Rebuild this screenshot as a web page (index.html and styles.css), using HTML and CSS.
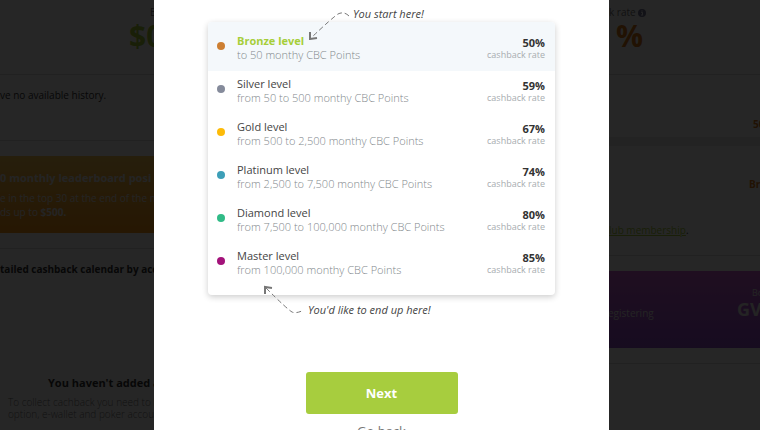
FILE: index.html
```html
<!DOCTYPE html>
<html lang="en">
<head>
  <meta charset="UTF-8" />
  <meta name="viewport" content="width=device-width, initial-scale=1.0" />
  <title>Cashback levels</title>
  <link rel="stylesheet" href="styles.css">
</head>
<body>
  <div class="page">
    <div class="column column-left">
      <section class="stat">
        <div class="stat-label">B</div>
        <div class="stat-value green">$0</div>
      </section>
      <section class="history">ve no available history.</section>
      <section class="banner banner-orange">
        <h3>0 monthly leaderboard posi</h3>
        <p>e in the top 30 at the end of the m</p>
        <p>ds up to <b>$500.</b></p>
      </section>
      <section class="calendar">
        <h4>tailed cashback calendar by acc</h4>
      </section>
      <section class="accounts">
        <h4>You haven't added a</h4>
        <p>To collect cachback you need to lin</p>
        <p>option, e-wallet and poker account</p>
      </section>
    </div>

    <div class="column column-right">
      <section class="stat">
        <div class="stat-label">k rate
          <svg class="info" viewBox="0 0 8 8"><circle cx="4" cy="4" r="4"/><path d="M3.2 3.4h1.3v2.4M3 6h2.2M4 1.4v1.2"/></svg>
        </div>
        <div class="stat-value orange">%</div>
      </section>
      <section class="rate orange">50</section>
      <section class="club">
        <div class="club-level orange">Bro</div>
        <p><a href="#">lub membership</a>.</p>
      </section>
      <section class="banner banner-purple">
        <span class="register">egistering</span>
        <div class="code">
          <div>Bo</div>
          <strong>GV</strong>
        </div>
      </section>
      <section class="last"></section>
    </div>
  </div>

  <div class="overlay">
    <div class="modal" role="dialog" aria-label="Cashback levels">
      <div class="note note-start">
        <svg class="arrow" width="44" height="32" viewBox="0 0 44 32">
          <path class="dash" d="M41 8 Q36 3 30 6 Q24 10 3 30"/>
          <path d="M2 24 L2 31 L9 30"/>
        </svg>
        You start here!
      </div>

      <ul class="levels">
        <li class="level active">
          <span class="dot bronze"></span>
          <div class="info-text"><div class="name">Bronze level</div><div class="range">to 50 monthy CBC Points</div></div>
          <div class="cashback"><b>50%</b><span>cashback rate</span></div>
        </li>
        <li class="level">
          <span class="dot silver"></span>
          <div class="info-text"><div class="name">Silver level</div><div class="range">from 50 to 500 monthy CBC Points</div></div>
          <div class="cashback"><b>59%</b><span>cashback rate</span></div>
        </li>
        <li class="level">
          <span class="dot gold"></span>
          <div class="info-text"><div class="name">Gold level</div><div class="range">from 500 to 2,500 monthy CBC Points</div></div>
          <div class="cashback"><b>67%</b><span>cashback rate</span></div>
        </li>
        <li class="level">
          <span class="dot platinum"></span>
          <div class="info-text"><div class="name">Platinum level</div><div class="range">from 2,500 to 7,500 monthy CBC Points</div></div>
          <div class="cashback"><b>74%</b><span>cashback rate</span></div>
        </li>
        <li class="level">
          <span class="dot diamond"></span>
          <div class="info-text"><div class="name">Diamond level</div><div class="range">from 7,500 to 100,000 monthy CBC Points</div></div>
          <div class="cashback"><b>80%</b><span>cashback rate</span></div>
        </li>
        <li class="level">
          <span class="dot master"></span>
          <div class="info-text"><div class="name">Master level</div><div class="range">from 100,000 monthy CBC Points</div></div>
          <div class="cashback"><b>85%</b><span>cashback rate</span></div>
        </li>
      </ul>

      <div class="note note-end">
        <svg class="arrow" width="44" height="32" viewBox="0 0 44 32">
          <path class="dash" d="M3 3 Q24 24 29 27 Q33 29 41 25"/>
          <path d="M2 9 L2 2 L9 3"/>
        </svg>
        You'd like to end up here!
      </div>

      <div class="actions">
        <button class="next" type="button">Next</button>
        <a class="back" href="#">Go back</a>
      </div>
    </div>
  </div>
</body>
</html>
```
FILE: styles.css
```css
* { box-sizing: border-box; }
body { margin: 0; height: 100vh; overflow: hidden; font-family: "Open Sans", "Noto Sans", sans-serif; font-size: 10px; line-height: 12px; color: #333; background: white; }
h3, h4, p, ul { margin: 0; padding: 0; }

/* page behind the popup */
.page { display: grid; grid-template-columns: 1fr 60% 1fr; white-space: nowrap; }
.column { min-width: 0; }
.column-left { margin-right: -8px; }
.column-right { grid-column: 3; }
.stat { height: 75px; padding-top: 6px; border-bottom: 1px solid #ddd; }
.column-left .stat { padding-left: 129px; }
.column-left .stat-label { padding-left: 21px; }
.column-right .stat-label { padding-left: 1px; }
.stat-label { color: #777; }
.info { width: 8px; height: 8px; vertical-align: -1px; }
.info circle { fill: #779; }
.info path { fill: none; stroke: white; }
.stat-value { font-size: 30px; line-height: 36px; font-weight: bold; }
.column-right .stat-value { padding-left: 8px; }
.green { color: #a6ce39; }
.orange { color: #d97818; }
.history { height: 66px; padding-top: 14px; border-bottom: 1px solid #ddd; }
.banner { height: 77px; }
.banner-orange { margin-top: 15px; padding-top: 16px; color: #eee; background: linear-gradient(#ffc850, #ff9914); }
.banner h3 { font-size: 11px; margin-bottom: 7px; }
.banner-orange p { line-height: 14px; }
.calendar { margin-top: 15px; padding-top: 14px; height: 129px; border-top: 1px solid #ddd; }
.calendar h4 { font-size: 10px; }
.accounts { padding-left: 8px; color: #777; }
.accounts h4 { padding: 0 0 7px 40px; font-size: 11px; color: #333; }
.accounts p { font-weight: 300; }

.rate { height: 62px; padding: 43px 0 0 145px; font-weight: bold; }
.club { height: 119px; padding-top: 32px; border-top: 9px solid #e8e8e8; border-bottom: 1px solid #ddd; }
.club-level { padding: 0 0 34px 141px; font-weight: bold; }
.club p { padding-left: 1px; }
.club a { color: #a6ce39; }
.banner-purple { display: flex; align-items: center; justify-content: space-between; margin-top: 15px; padding-top: 6px; color: #eee; background: linear-gradient(#d060d8, #9650d2); }
.code { width: 23px; padding-bottom: 20px; font-size: 9px; }
.code div { padding-left: 15px; }
.code strong { font-size: 18px; line-height: 20px; }
.last { margin-top: 15px; border-top: 1px solid #ddd; }

/* popup */
.overlay { position: fixed; inset: 0; display: flex; justify-content: center; padding-left: 3px; overflow: hidden; background: rgba(0,0,0,0.85); }
.modal { width: 455px; max-width: 100%; padding: 0 54px; background: white; }
.note { position: relative; padding-left: 145px; font-size: 11px; line-height: 16px; font-style: italic; color: #444; }
.note-start { padding-top: 6px; }
.note-end { padding: 7px 0 0 100px; }
.arrow { position: absolute; left: 100px; top: 8px; z-index: 1; fill: none; stroke: #777; stroke-width: 2; }
.note-end .arrow { left: 55px; top: -10px; }
.dash { stroke-width: 1; stroke-dasharray: 5 3; }
.levels { list-style: none; padding-bottom: 9px; border-radius: 4px; box-shadow: 0 2px 6px rgba(0,0,0,0.2); }
.level { display: flex; height: 43px; padding: 6px 10px 0 9px; }
.level.active { height: 49px; padding-top: 12px; border-radius: 4px 4px 0 0; background: #f4f8fb; }
.dot { width: 8px; height: 8px; margin: 8px 12px 0 0; border-radius: 50%; }
.bronze { background: #cd7f32; }
.silver { background: #858b9b; }
.gold { background: #fdbb08; }
.platinum { background: #3d9fb8; }
.diamond { background: #31bb87; }
.master { background: #a3127a; }
.info-text { flex: 1; font-size: 11px; line-height: 14px; }
.name { color: #444; }
.active .name { font-weight: bold; color: #a6ce39; }
.range { font-weight: 300; color: #82888c; }
.cashback { padding-top: 3px; text-align: right; font-size: 9px; color: #a8adb0; }
.cashback b, .cashback span { display: block; }
.cashback b { font-size: 11px; color: #333; }
.actions { display: flex; flex-direction: column; align-items: center; padding-top: 54px; }
.next { width: 152px; height: 42px; border: none; border-radius: 3px; font-family: inherit; font-size: 13px; font-weight: bold; color: white; background: #a7cd3e; cursor: pointer; }
.back { margin-top: 8px; font-size: 13px; line-height: 18px; color: #777; text-decoration: none; }
```
